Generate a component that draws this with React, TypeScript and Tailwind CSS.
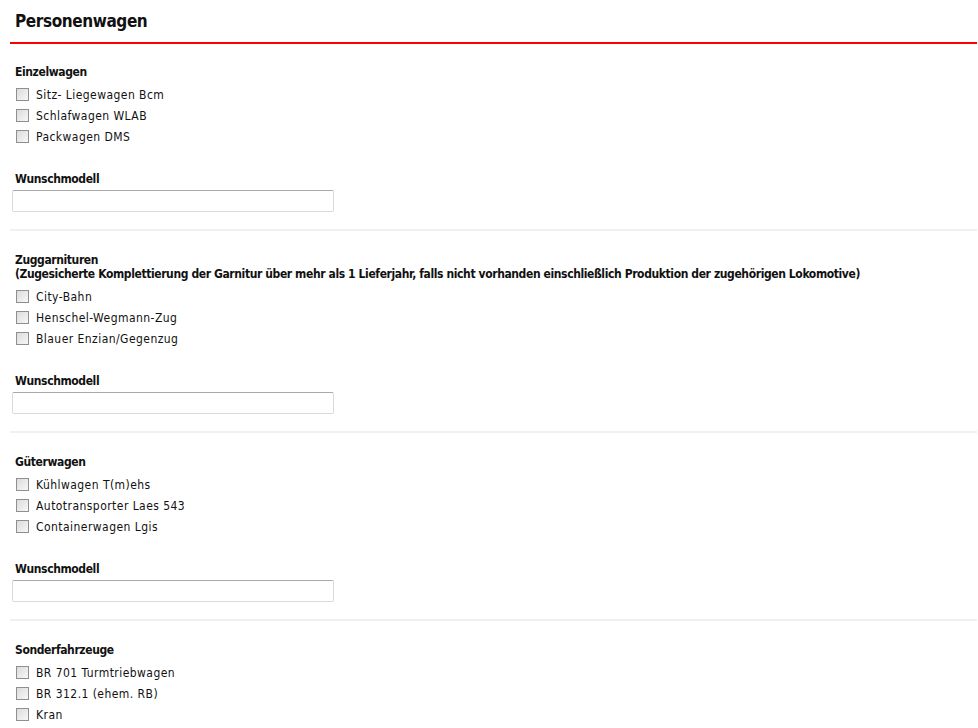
import React from "react";

const font = { fontFamily: '"DejaVu Sans Condensed", "DejaVu Sans", Tahoma, sans-serif' };

type Section = { title: string; sub?: string; items: string[]; wish: boolean };

const sections: Section[] = [
  { title: "Einzelwagen", items: ["Sitz- Liegewagen Bcm", "Schlafwagen WLAB", "Packwagen DMS"], wish: true },
  {
    title: "Zuggarnituren",
    sub: "(Zugesicherte Komplettierung der Garnitur über mehr als 1 Lieferjahr, falls nicht vorhanden einschließlich Produktion der zugehörigen Lokomotive)",
    items: ["City-Bahn", "Henschel-Wegmann-Zug", "Blauer Enzian/Gegenzug"],
    wish: true,
  },
  { title: "Güterwagen", items: ["Kühlwagen T(m)ehs", "Autotransporter Laes 543", "Containerwagen Lgis"], wish: true },
  { title: "Sonderfahrzeuge", items: ["BR 701 Turmtriebwagen", "BR 312.1 (ehem. RB)", "Kran"], wish: false },
];

function Box() {
  return (
    <span className="ml-[16px] mr-[7px] inline-block h-[13px] w-[13px] shrink-0 border border-[#8e8f8f] bg-gradient-to-br from-[#dcdcdc] to-[#f7f7f7]" />
  );
}

export default function App() {
  return (
    <div className="min-h-[728px] w-[978px] bg-white text-[12px] text-[#111]" style={font}>
      <div className="ml-[10px] mr-[1px] h-[44px] border-b-2 border-[#ff0000]">
        <div className="pl-[5px] pt-[10px] text-[17px] font-bold leading-[22px] tracking-[-0.4px] text-[#111]">Personenwagen</div>
      </div>
      {sections.map((s, i) => (
        <div key={s.title}>
          {i > 0 && <div className="ml-[10px] mr-[1px] h-[2px] bg-[#f0f0f0]" />}
          <div className={i > 0 ? "pt-[22px]" : "pt-[21px]"}>
            <div className="pl-[15px] font-bold leading-[14px] tracking-[-0.39px]">{s.title}</div>
            {s.sub && <div className="pl-[15px] font-bold leading-[14px] tracking-[-0.39px]">{s.sub}</div>}
            <div className="mt-[5px]">
              {s.items.map((it) => (
                <div key={it} className="flex h-[21px] items-center">
                  <Box />
                  <span className="leading-[14px] tracking-[0.45px]">{it}</span>
                </div>
              ))}
            </div>
            {s.wish && (
              <div className="mt-[25px] pb-[17px]">
                <div className="pl-[15px] font-bold leading-[14px] tracking-[-0.39px]">Wunschmodell</div>
                <div className="ml-[12px] mt-[4px] h-[22px] w-[322px] rounded-[2px] border border-[#dadada] border-t-[#a8a8a8]" />
              </div>
            )}
          </div>
        </div>
      ))}
    </div>
  );
}
